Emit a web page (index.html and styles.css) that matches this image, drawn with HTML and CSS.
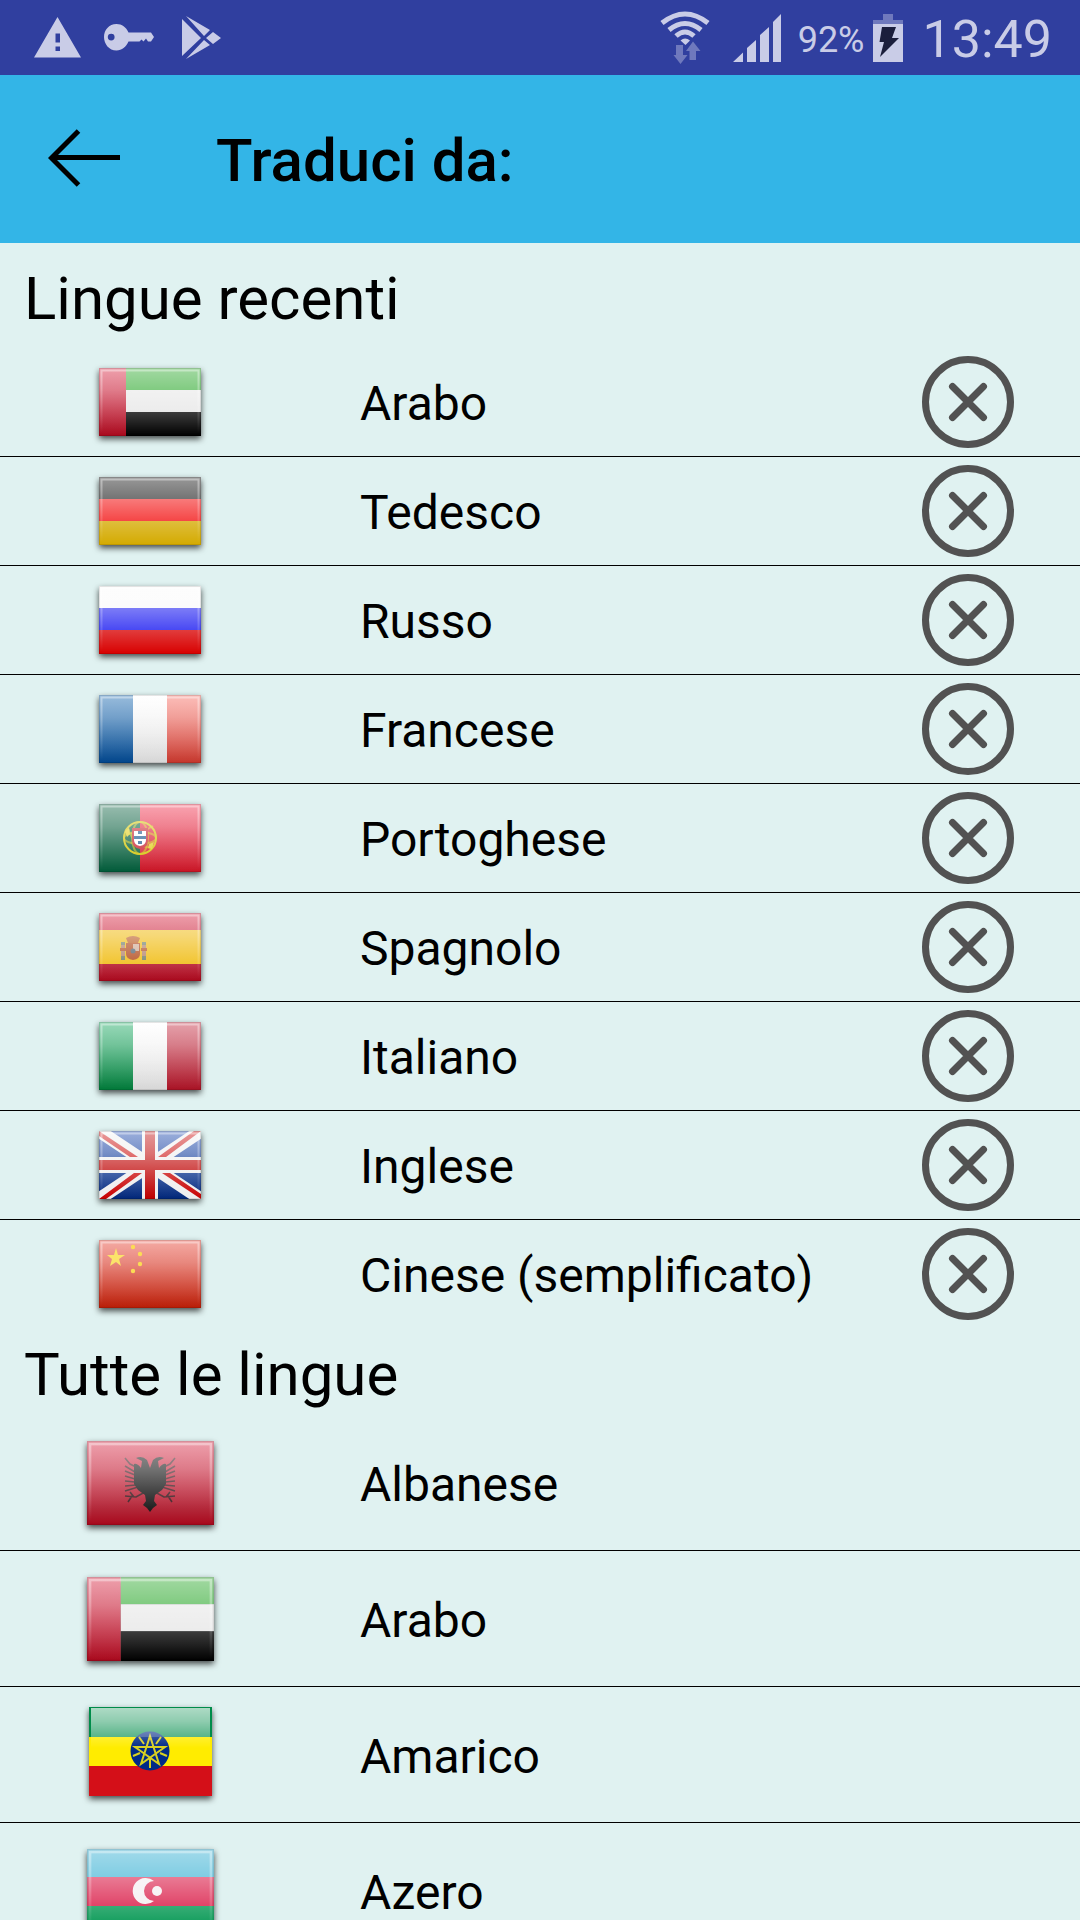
FILE: index.html
```html
<!DOCTYPE html>
<html lang="it">
<head>
<meta charset="utf-8">
<meta name="viewport" content="width=device-width, initial-scale=1">
<title>Traduci da</title>
<link rel="stylesheet" href="styles.css">
</head>
<body>
<svg class="sprite" aria-hidden="true">
  <defs>
    <linearGradient id="gloss" x1="0" y1="0" x2="0" y2="1">
      <stop offset="0" stop-color="#fff" stop-opacity=".6"/>
      <stop offset=".33" stop-color="#fff" stop-opacity=".45"/>
      <stop offset="1" stop-color="#fff" stop-opacity="0"/>
    </linearGradient>
    <linearGradient id="rim" x1="0" y1="0" x2="0" y2="1">
      <stop offset="0" stop-color="#fff" stop-opacity=".4"/>
      <stop offset="1" stop-color="#fff" stop-opacity="0"/>
    </linearGradient>
    <linearGradient id="silver" x1="0" y1="0" x2="0" y2="1">
      <stop offset="0" stop-color="#fff"/>
      <stop offset="1" stop-color="#d6d6d6"/>
    </linearGradient>
    <linearGradient id="coral" x1="0" y1="0" x2="0" y2="1">
      <stop offset="0" stop-color="#f65c50"/>
      <stop offset="1" stop-color="#c4352b"/>
    </linearGradient>
    <linearGradient id="crimson" gradientUnits="userSpaceOnUse" x1="0" y1="0" x2="0" y2="68">
      <stop offset="0" stop-color="#d41230"/>
      <stop offset="1" stop-color="#a8081c"/>
    </linearGradient>
    <linearGradient id="ruby" x1="0" y1="0" x2="0" y2="1">
      <stop offset="0" stop-color="#f01c3c"/>
      <stop offset="1" stop-color="#c81424"/>
    </linearGradient>
    <linearGradient id="scarlet" x1="0" y1="0" x2="0" y2="1">
      <stop offset="0" stop-color="#e42c1c"/>
      <stop offset="1" stop-color="#b81c06"/>
    </linearGradient>
    <linearGradient id="emerald" x1="0" y1="0" x2="0" y2="1">
      <stop offset="0" stop-color="#00a050"/>
      <stop offset="1" stop-color="#007838"/>
    </linearGradient>
    <linearGradient id="cobalt" x1="0" y1="0" x2="0" y2="1">
      <stop offset="0" stop-color="#0058a8"/>
      <stop offset="1" stop-color="#00448a"/>
    </linearGradient>
    <linearGradient id="navy" x1="0" y1="0" x2="0" y2="1">
      <stop offset="0" stop-color="#0838a8"/>
      <stop offset="1" stop-color="#002678"/>
    </linearGradient>
  </defs>
  <symbol id="finish" viewBox="0 0 102 68" preserveAspectRatio="none">
    <rect width="102" height="68" fill="url(#gloss)"/>
    <rect x="2.5" y="2.5" width="97" height="63" fill="none" stroke="url(#rim)" stroke-width="2"/>
    <rect x=".5" y=".5" width="101" height="67" fill="none" stroke="#000" stroke-opacity=".1"/>
  </symbol>
  <symbol id="uae" viewBox="0 0 102 68" preserveAspectRatio="none">
    <path fill="#18a018" d="M27 0h75v22H27z"/><path fill="#e6e6e6" d="M27 22h75v22H27z"/><path d="M27 44h75v24H27z"/><path fill="url(#crimson)" d="M0 0h27v68H0z"/>
    <use href="#finish"/>
  </symbol>
  <symbol id="germany" viewBox="0 0 102 68" preserveAspectRatio="none">
    <path d="M0 0h102v22H0z"/><path fill="#f20c0c" d="M0 22h102v22H0z"/><path fill="#d4aa00" d="M0 44h102v24H0z"/>
    <use href="#finish"/>
  </symbol>
  <symbol id="russia" viewBox="0 0 102 68" preserveAspectRatio="none">
    <path fill="#fafafa" d="M0 0h102v22H0z"/><path fill="#1010f0" d="M0 22h102v22H0z"/><path fill="#d80000" d="M0 44h102v24H0z"/>
    <use href="#finish"/>
  </symbol>
  <symbol id="france" viewBox="0 0 102 68" preserveAspectRatio="none">
    <path fill="url(#cobalt)" d="M0 0h34v68H0z"/><path fill="url(#silver)" d="M34 0h34v68H34z"/><path fill="url(#coral)" d="M68 0h34v68H68z"/>
    <use href="#finish"/>
  </symbol>
  <symbol id="portugal" viewBox="0 0 102 68" preserveAspectRatio="none">
    <path fill="#005a38" d="M0 0h41v68H0z"/><path fill="url(#ruby)" d="M41 0h61v68H41z"/>
    <g fill="none" stroke="#d2c400" stroke-width="2"><circle cx="41" cy="34" r="16"/><g stroke-opacity=".6"><ellipse cx="41" cy="34" rx="16" ry="6"/><ellipse cx="41" cy="34" rx="8" ry="16"/><path d="M29 24q5 18 24 20M27 30q15 0 27-8"/></g></g>
    <path fill="#e0d020" d="M26 27l4-3 1 6-3 3zM50 40l5-2-2 7-4-1z"/>
    <path fill="#c8202c" d="M33 24h16v12q0 8-8 9q-8-1-8-9z"/><path fill="#fff" d="M35 27h12v9q0 5-6 6q-6-1-6-6z"/>
    <path fill="#205a90" d="M39 27h4v3h-4zM35 32h4v3h-4zM39 32h4v3h-4zM43 32h4v3h-4zM39 37h4v3h-4z"/>
    <use href="#finish"/>
  </symbol>
  <symbol id="spain" viewBox="0 0 102 68" preserveAspectRatio="none">
    <path fill="url(#crimson)" d="M0 0h102v68H0z"/><path fill="#efb908" d="M0 17h102v34H0z"/>
    <g opacity=".8"><path fill="#a83818" d="M27 25q7-4 14 0l-2 5H29z"/><path fill="#a02818" d="M27 30h14v11q0 5-7 6q-7-1-7-6z"/><path fill="#c8a8b8" d="M34 31h6v7h-6z"/><circle cx="34" cy="38" r="2.500" fill="#204888"/><path fill="#a07080" d="M22 31h4v14h-4zM43 31h4v14h-4z"/><path fill="#a03020" d="M21 35h6v3h-6zM42 35h6v3h-6z"/><path fill="#486878" d="M22 29h4v3h-4zM43 29h4v3h-4zM22 43h4v4h-4zM43 43h4v4h-4z"/></g>
    <use href="#finish"/>
  </symbol>
  <symbol id="italy" viewBox="0 0 102 68" preserveAspectRatio="none">
    <path fill="url(#emerald)" d="M0 0h34v68H0z"/><path fill="url(#silver)" d="M34 0h34v68H34z"/><path fill="#a81c2c" d="M68 0h34v68H68z"/>
    <path fill="url(#crimson)" fill-opacity=".5" d="M68 0h34v68H68z"/>
    <use href="#finish"/>
  </symbol>
  <symbol id="uk" viewBox="0 0 102 68" preserveAspectRatio="none">
    <path fill="url(#navy)" d="M0 0h102v68H0z"/>
    <path stroke="#eee" stroke-width="13" d="M0 0l102 68M102 0L0 68"/>
    <path fill="#c80000" d="M0 0v5l31 21h8zM102 68v-5L71 42h-8zM95 0h7L67 26h-8zM0 68h7l36-26h-8z"/>
    <path fill="#eee" d="M43 0h16v26h43v16H59v26H43V42H0V26h43z"/><path fill="#be0000" d="M46 0h10v29h46v10H56v29H46V39H0V29h46z"/>
    <use href="#finish"/>
  </symbol>
  <symbol id="china" viewBox="0 0 102 68" preserveAspectRatio="none">
    <path fill="url(#scarlet)" d="M0 0h102v68H0z"/>
    <use href="#finish"/>
    <path fill="#fbe36a" d="M17 8l2 7h7l-6 4 2 7-5-4-6 4 2-7-5-4h7z"/>
    <g fill="#fbdc55"><circle cx="34" cy="7" r="2.200"/><circle cx="41" cy="14" r="2.200"/><circle cx="41" cy="24" r="2.200"/><circle cx="34" cy="31" r="2.200"/></g>
  </symbol>
  <symbol id="albania" viewBox="0 0 127 84" preserveAspectRatio="none">
    <path fill="url(#crimson)" d="M0 0h127v84H0z"/>
    <g fill="#000"><path d="M63 27l-3-8q-5-5-11-2l6 3-1 7q-4-5-7-4v20l4 6 7 5 1 6-3 4 4 3 3 4 3-4 4-3-3-4 1-6 7-5 4-6V23q-3-1-7 4l-1-7 6-3q-6-3-11 2z"/>
    <path fill="none" stroke="#000" stroke-opacity=".8" stroke-width="1.600" d="M49 26L43 23 38 17M48 31l-10-6M48 34l-10-4M48 38l-10-3M48 41l-10-1M49 44l-11 1M51 46l-13 4M58 51l-9 5-11-1m7 0l-4 6m6-5l-4-5M77 26l6-3 5-6M78 31l10-6M78 34l10-4M78 38l10-3M78 41l10-1M77 44l11 1M75 46l13 4M68 51l9 5 11-1m-7 0l4 6m-6-5l4-5"/></g>
    <use href="#finish" width="127" height="84"/>
  </symbol>
  <symbol id="ethiopia" viewBox="0 0 123 89" preserveAspectRatio="none">
    <path fill="#008c4a" d="M0 0h123v30H0z"/><path fill="#ffec00" d="M0 30h123v29H0z"/><path fill="#d40f18" d="M0 59h123v30H0z"/>
    <circle cx="61" cy="44" r="19.500" fill="#002a86"/>
    <path fill="none" stroke="#d8d020" stroke-width="2" d="M61 29l9 28-24-17h30L52 57zM61 61v-9M44 49l7-3M78 49l-7-3M50 30l5 7M72 30l-5 7"/>
    <path fill="#fff" fill-opacity=".2" d="M2 1h119v29H2z"/>
    <path fill="url(#gloss)" d="M2 1h119v40H2z"/>
  </symbol>
  <symbol id="azerbaijan" viewBox="0 0 127 84" preserveAspectRatio="none">
    <path fill="#18a4cc" d="M0 0h127v28H0z"/><path fill="#d8103e" d="M0 28h127v29H0z"/><path fill="#009650" d="M0 57h127v27H0z"/>
    <path fill="#f4eef0" d="M67 32a13 13 0 1 0 0 20a10 10 0 1 1 0-20z"/><circle cx="70" cy="42" r="5" fill="#f4eef0"/>
    <use href="#finish" width="127" height="84"/>
  </symbol>
  <symbol id="cross" viewBox="0 0 92 92">
    <g fill="none" stroke="#525252" stroke-width="7"><circle cx="46" cy="46" r="42.500"/><path stroke-linecap="round" d="M30.500 30.500l31 31M61.500 30.500l-31 31"/></g>
  </symbol>
</svg>

<div class="screen">
  <div class="status">
    <div class="status-left">
      <svg width="48" height="42" viewBox="0 0 48 42"><path fill="currentColor" fill-rule="evenodd" d="M23.500 0L47 40.500H0zM21.500 16.500v9h4.500v-9zM21.500 29.500v4.500h4.500v-4.500z"/></svg>
      <svg class="key" width="50" height="27" viewBox="0 0 50 27"><path fill="currentColor" fill-rule="evenodd" d="M12.500 0C18 0 22 3 24.500 8.500H47l3 4.500-3 4.500h-3l-2-3-2.500 3-2-2-2 2H24.500C22 23 18 26.500 12.500 26.500C5 26.500 0 20 0 13S5 0 12.500 0zM7.200 9.700a3.400 3.400 0 1 0 0 6.800a3.400 3.400 0 1 0 0-6.800z"/></svg>
      <svg width="40" height="44" viewBox="0 0 40 44"><path fill="currentColor" d="M0 3l19 19L0 40zM4 0l24 14-6 6zM24 22l7-6 8 6-8 6zM22 24l6 5L4 43z"/></svg>
    </div>
    <div class="status-right">
      <svg class="wifi" width="50" height="54" viewBox="0 0 50 54"><g fill="none" stroke="currentColor" stroke-width="5"><path d="M2 12q23-18 46 0M9 19q16-13 32 0M16 25q9-8 18 0"/></g><path fill="currentColor" d="M20.500 29.500q4.500-4 9.500 0L25.500 34z"/><path class="dim" d="M16 34h7v10h4.500L20.500 53l-7-9H16zM29.500 49V40H26l7-9.500 7.500 9.500H36v9z"/></svg>
      <svg class="signal" width="48" height="48" viewBox="0 0 48 48"><path fill="currentColor" d="M0 48l10-9.500V48zM14 48V34l9-8v22zM27 48V21l9-8v35zM40 48V8l8-8v48z"/></svg>
      <span class="percent">92%</span>
      <svg class="battery" width="30" height="48" viewBox="0 0 30 48"><path class="dim" d="M10 0h10v6h10v5H0V6h10z"/><path fill="currentColor" d="M0 10h30v38H0z"/><path fill="#1b1e3c" d="M9 13h14l-4 11h7L7 43l4-15H6.500z"/></svg>
      <time class="clock">13:49</time>
    </div>
  </div>

  <header class="bar">
    <button class="back" type="button" aria-label="Indietro">
      <svg width="72" height="58" viewBox="0 0 72 58"><path fill="none" stroke="#000" stroke-width="5" d="M30.500 2L3.500 29l27 27M3.500 28.500H72"/></svg>
    </button>
    <h1>Traduci da:</h1>
  </header>

  <main>
    <section class="recent">
      <h2>Lingue recenti</h2>
      <ul>
        <li><button class="lang" type="button"><svg class="flag"><use href="#uae"/></svg><span>Arabo</span></button><button class="remove" type="button" aria-label="Rimuovi Arabo"><svg><use href="#cross"/></svg></button></li>
        <li><button class="lang" type="button"><svg class="flag"><use href="#germany"/></svg><span>Tedesco</span></button><button class="remove" type="button" aria-label="Rimuovi Tedesco"><svg><use href="#cross"/></svg></button></li>
        <li><button class="lang" type="button"><svg class="flag"><use href="#russia"/></svg><span>Russo</span></button><button class="remove" type="button" aria-label="Rimuovi Russo"><svg><use href="#cross"/></svg></button></li>
        <li><button class="lang" type="button"><svg class="flag"><use href="#france"/></svg><span>Francese</span></button><button class="remove" type="button" aria-label="Rimuovi Francese"><svg><use href="#cross"/></svg></button></li>
        <li><button class="lang" type="button"><svg class="flag"><use href="#portugal"/></svg><span>Portoghese</span></button><button class="remove" type="button" aria-label="Rimuovi Portoghese"><svg><use href="#cross"/></svg></button></li>
        <li><button class="lang" type="button"><svg class="flag"><use href="#spain"/></svg><span>Spagnolo</span></button><button class="remove" type="button" aria-label="Rimuovi Spagnolo"><svg><use href="#cross"/></svg></button></li>
        <li><button class="lang" type="button"><svg class="flag"><use href="#italy"/></svg><span>Italiano</span></button><button class="remove" type="button" aria-label="Rimuovi Italiano"><svg><use href="#cross"/></svg></button></li>
        <li><button class="lang" type="button"><svg class="flag"><use href="#uk"/></svg><span>Inglese</span></button><button class="remove" type="button" aria-label="Rimuovi Inglese"><svg><use href="#cross"/></svg></button></li>
        <li><button class="lang" type="button"><svg class="flag"><use href="#china"/></svg><span>Cinese (semplificato)</span></button><button class="remove" type="button" aria-label="Rimuovi Cinese (semplificato)"><svg><use href="#cross"/></svg></button></li>
      </ul>
    </section>
    <section class="all">
      <h2>Tutte le lingue</h2>
      <ul>
        <li><button class="lang" type="button"><svg class="flag"><use href="#albania"/></svg><span>Albanese</span></button></li>
        <li><button class="lang" type="button"><svg class="flag"><use href="#uae"/></svg><span>Arabo</span></button></li>
        <li><button class="lang" type="button"><svg class="flag flag-tall"><use href="#ethiopia"/></svg><span>Amarico</span></button></li>
        <li><button class="lang" type="button"><svg class="flag"><use href="#azerbaijan"/></svg><span>Azero</span></button></li>
      </ul>
    </section>
  </main>
</div>
</body>
</html>
```
FILE: styles.css
```css
* {
  box-sizing: border-box;
}

body {
  margin: 0;
  background: #e0f2f1;
  color: #000;
  font-family: Roboto, "Liberation Sans", sans-serif;
}

.sprite {
  position: absolute;
  width: 0;
  height: 0;
}

button {
  margin: 0;
  padding: 0;
  border: 0;
  background: none;
  color: inherit;
  font: inherit;
  text-align: left;
}

svg {
  display: block;
  flex: none;
}

.screen {
  display: flex;
  flex-direction: column;
  height: 100vh;
}

/* System status bar */
.status {
  display: flex;
  flex: none;
  justify-content: space-between;
  align-items: center;
  height: 75px;
  padding: 0 28px 0 34px;
  background: #303f9f;
  color: #c9cce7;
}

.status-left,
.status-right {
  display: flex;
  align-items: center;
}

.key {
  margin: 0 28px 0 22px;
}

.dim {
  fill: #6f79bd;
}

.signal {
  margin-left: 23px;
}

.percent {
  margin-left: 17px;
  padding-top: 4px;
  font-size: 36px;
}

.battery {
  margin: 0 20px 0 8px;
}

.clock {
  padding-top: 4px;
  font-size: 52px;
  line-height: 70px;
}

/* App bar */
.bar {
  display: flex;
  flex: none;
  align-items: center;
  gap: 96px;
  height: 168px;
  padding: 0 48px;
  background: #33b5e7;
}

.back {
  padding-bottom: 2px;
}

h1 {
  margin: 0;
  padding-top: 2px;
  font-size: 60px;
  font-weight: 500;
}

/* Language lists */
main {
  flex: 1;
  min-height: 0;
  overflow-y: auto;
  scrollbar-width: none;
}

h2 {
  margin: 0;
  padding: 0 24px;
  font-size: 60px;
  font-weight: 400;
  line-height: 80px;
}

.recent h2 {
  padding-top: 16px;
  padding-bottom: 9px;
}

.all h2 {
  padding-top: 6px;
}

ul {
  margin: 0;
  padding: 0;
  list-style: none;
}

li {
  display: flex;
  align-items: center;
  border-bottom: 1px solid #000;
}

.recent li:last-child {
  border-bottom-color: transparent;
}

.lang {
  display: grid;
  flex: 1;
  grid-template-columns: 300px 1fr;
  column-gap: 60px;
  align-items: center;
  font-size: 48px;
}

.lang span {
  padding-top: 3px;
}

.recent .lang {
  height: 108px;
}

.all .lang {
  height: 135px;
}

.flag {
  width: 102px;
  height: 68px;
  justify-self: center;
  filter: drop-shadow(0 3px 3px rgba(0, 0, 0, .7));
}

.all .flag {
  width: 127px;
  height: 84px;
}

.all .flag-tall {
  width: 123px;
  height: 89px;
  margin-bottom: 7px;
}

.remove {
  margin-right: 66px;
}

.remove svg {
  width: 92px;
  height: 92px;
}
```
